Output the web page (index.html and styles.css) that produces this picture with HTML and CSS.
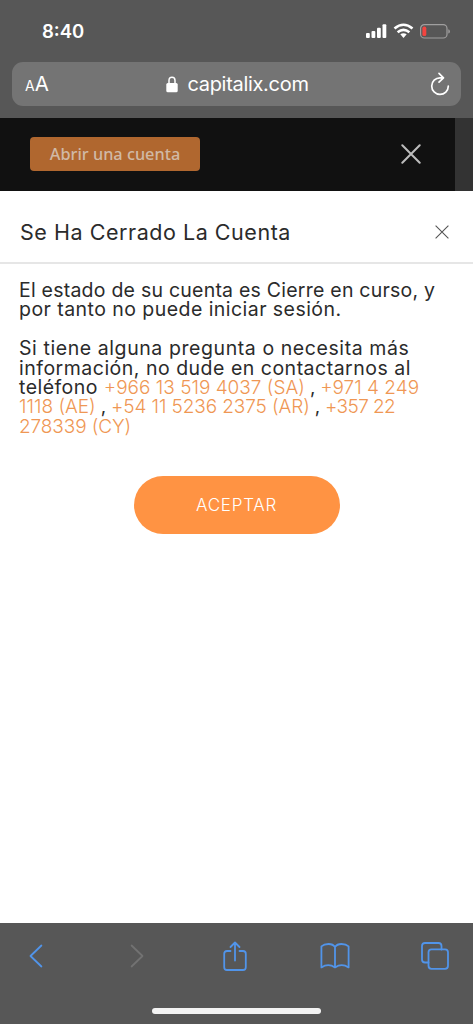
FILE: index.html
```
<!DOCTYPE html>
<html lang="es">
<head>
<meta charset="utf-8">
<meta name="viewport" content="width=device-width, initial-scale=1">
<title>Capitalix</title>
<link rel="stylesheet" href="styles.css">
</head>
<body>
<div class="screen">
  <header class="browser-top">
    <div class="status">
      <span class="time">8:40</span>
      <svg class="status-icons" width="86" height="18" viewBox="0 0 86 18">
        <g fill="#fff">
          <rect x="2" y="11" width="3.8" height="5" rx="1"/><rect x="7.5" y="9" width="3.8" height="7" rx="1"/><rect x="13" y="5.8" width="3.8" height="10.2" rx="1"/><rect x="18.5" y="2.2" width="3.8" height="13.8" rx="1"/>
          <path d="M36.3 12.2q3.2-2 6.4 0L39.5 16z"/>
        </g>
        <path d="M30.5 6.5q9-7.5 18 0M33.6 10.3q5.9-4.7 11.8 0" fill="none" stroke="#fff" stroke-width="2.6"/>
        <rect x="56.6" y="2.6" width="26.4" height="13.4" rx="3.8" fill="none" stroke="#a09f9f" stroke-width="1.2"/>
        <rect x="58.4" y="4.6" width="3.9" height="9.4" rx="1.6" fill="#f3443f"/>
        <path d="M84.3 7.2q1.6.4 1.6 2.2t-1.6 2.2z" fill="#a09f9f"/>
      </svg>
    </div>
    <div class="address">
      <span class="text-size"><small>A</small>A</span>
      <span class="domain">
        <svg width="12" height="17" viewBox="0 0 12 17"><path d="M3 8V4.4Q3 1.2 6 1.2T9 4.4V8" fill="none" stroke="#fff" stroke-width="1.5"/><rect x=".3" y="7.1" width="11.4" height="9.2" rx="1.5" fill="#fff"/></svg>
        <span class="host">capitalix.com</span>
      </span>
      <svg class="reload" width="20" height="24" viewBox="0 0 20 24" fill="none" stroke="#fff" stroke-width="1.7" stroke-linecap="round" stroke-linejoin="round"><path d="M12.7 5.8H10a8.3 8.3 0 1 0 8.3 8.4M9 1.4l4.5 4.4L9 10.2"/></svg>
    </div>
  </header>

  <section class="page-bar">
    <div class="page-nav">
      <button class="open-account"><span>Abrir una cuenta</span></button>
      <svg width="20" height="20" viewBox="0 0 20 20" stroke="#bdbdbd" stroke-width="2" stroke-linecap="round"><path d="M1.3 1.3l17.4 17.4M18.7 1.3L1.3 18.7"/></svg>
    </div>
  </section>

  <main class="dialog">
    <div class="dialog-head">
      <h1>Se Ha Cerrado La Cuenta</h1>
      <svg width="14" height="14" viewBox="0 0 14 14" stroke="#555" stroke-width="1.1"><path d="M.6.6l12.8 12.8M13.4.6L.6 13.4"/></svg>
    </div>
    <div class="message">
      <p><span class="l1">El estado de su cuenta es Cierre en curso, y</span><br><span class="l2">por tanto no puede iniciar sesión.</span></p>
      <p><span class="l3">Si tiene alguna pregunta o necesita más</span><br><span class="l4">información, no dude en contactarnos al</span><br><span class="l5">teléfono </span><a>+966 13 519 4037 (SA)</a><span class="sep"> , </span><a>+971 4 249</a><br><a>1118 (AE)</a><span class="sep"> , </span><a class="tight">+54 11 5236 2375 (AR)</a><span class="sep"> , </span><a class="tighter">+357 22</a><br><a class="tight">278339 (CY)</a></p>
    </div>
    <button class="accept">ACEPTAR</button>
  </main>

  <footer class="toolbar">
    <nav class="tools">
      <svg width="14" height="24" viewBox="0 0 14 24"><path d="M12.4 1.5L1.5 12l10.9 10.5"/></svg>
      <svg class="disabled" width="14" height="24" viewBox="0 0 14 24"><path d="M1.6 1.5L12.5 12 1.6 22.5"/></svg>
      <svg width="24" height="30" viewBox="0 0 24 30"><path d="M7.5 10H4Q1.2 10 1.2 12.8v13.4Q1.2 29 4 29h16q2.8 0 2.8-2.8V12.8Q22.8 10 20 10h-3.5M12 19.5V1.7M7.5 6L12 1.5 16.5 6"/></svg>
      <svg width="30" height="26" viewBox="0 0 30 26"><path d="M15 4Q13 1 8.5 1 4 1 1.4 3.4v21q6.8-4.6 13.6 0 6.8-4.6 13.6 0v-21Q26 1 21.5 1 17 1 15 4v20.4"/></svg>
      <svg width="28" height="28" viewBox="0 0 28 28"><path d="M7.5 20.5H4Q1 20.5 1 17.5V4Q1 1 4 1h13.5q3 0 3 3v3.5"/><rect x="7.5" y="7.3" width="19.5" height="19.5" rx="3"/></svg>
    </nav>
    <div class="home"></div>
  </footer>
</div>
</body>
</html>
```
FILE: styles.css
```
* { box-sizing: border-box; }
body { margin: 0; font-family: Inter, "Liberation Sans", sans-serif; }
button { border: 0; padding: 0; font: inherit; }
svg { display: block; flex: none; }
.screen { width: 473px; height: 1024px; display: flex; flex-direction: column; background: #fff; overflow: hidden; }
.browser-top { height: 118px; background: #575757; color: #fff; padding: 0 12px; flex: none; }
.status { height: 62px; display: flex; justify-content: space-between; align-items: center; padding: 0 11px 0 30px; }
.time { font-size: 18.5px; font-weight: 600; line-height: 20px; margin-bottom: 1px; }
.address { height: 44px; border-radius: 11px; background: #747474; display: grid; grid-template-columns: 80px 1fr 80px; align-items: center; padding: 0 11px 0 13px; }
.text-size { font-size: 20.5px; line-height: 1; }
.text-size small { font-size: 14px; }
.domain { display: flex; justify-content: center; align-items: center; gap: 9px; }
.host { font-size: 20px; letter-spacing: -.3px; white-space: nowrap; }
.reload { justify-self: end; }
.page-bar { height: 73px; background: #333; flex: none; padding-right: 18px; }
.page-nav { height: 73px; background: #111; display: flex; align-items: center; justify-content: space-between; padding: 0 34px 1px 30px; }
.open-account { width: 170px; height: 34px; border-radius: 4px; background: #b0672f; color: #d0b9a5; font-family: "Noto Sans", sans-serif; font-weight: 500; font-size: 16.3px; white-space: nowrap; }
.dialog { flex: 1; display: flex; flex-direction: column; color: #2b2b2b; }
.dialog-head { height: 73px; border-bottom: 2px solid #e6e6e6; display: flex; align-items: center; justify-content: space-between; padding: 10px 24px 0 20px; }
h1 { margin: 0; font-size: 21.5px; font-weight: 400; letter-spacing: .54px; white-space: nowrap; }
.message { padding: 17px 18px 0 19px; font-size: 19px; line-height: 19.4px; font-weight: 400; white-space: nowrap; }
.message p { margin: 0 0 19.4px; }
.message a { color: #ef9754; font-weight: 300; }
.l1, .l2, .l3, .l4, .l5 { font-size: 19.5px; }
.l1 { letter-spacing: .23px; }
.l2 { letter-spacing: .45px; }
.l3 { letter-spacing: .58px; }
.l4 { letter-spacing: .5px; }
.l5 { letter-spacing: .45px; }
.sep { letter-spacing: -.3px; }
.tight { letter-spacing: -.1px; }
.tighter { letter-spacing: -.6px; }
.accept { width: 206px; height: 58px; margin: 20px auto 0; border-radius: 29px; background: #ff9343; color: #fff; font-size: 17px; font-weight: 300; letter-spacing: .75px; }
.toolbar { height: 101px; background: #575757; display: flex; flex-direction: column; flex: none; }
.tools { height: 66px; display: grid; grid-template-columns: repeat(5, 1fr); align-items: center; justify-items: center; margin: 0 -13px 0 -14px; padding-right: 1px; }
.tools svg { fill: none; stroke: #5194e9; stroke-width: 1.8; stroke-linecap: round; stroke-linejoin: round; }
.tools .disabled { stroke: #727272; margin-left: 3px; }
.home { width: 169px; height: 6px; border-radius: 3px; background: #f3f3f3; margin: 19px auto 0; }
```
